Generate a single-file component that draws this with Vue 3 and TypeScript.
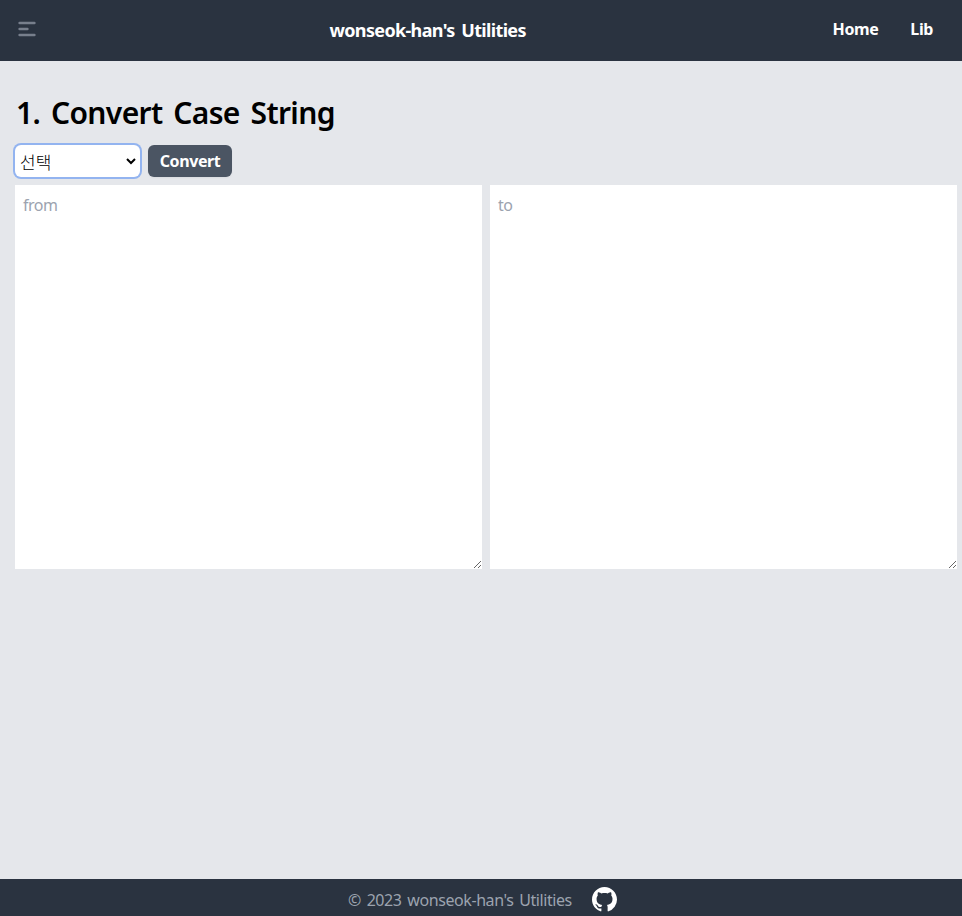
<script setup lang="ts">
import { ref } from 'vue'

type CaseKind = '' | 'upper' | 'lower' | 'camel' | 'snake'

const kind = ref<CaseKind>('')
const source = ref('')
const result = ref('')

const words = (text: string): string[] =>
  text.replace(/([a-z\d])([A-Z])/g, '$1 $2').split(/[\s_-]+/).filter(Boolean)

function convert(): void {
  const list = words(source.value).map((w) => w.toLowerCase())
  switch (kind.value) {
    case 'upper':
      result.value = source.value.toUpperCase()
      break
    case 'lower':
      result.value = source.value.toLowerCase()
      break
    case 'camel':
      result.value = list.map((w, i) => (i ? w[0].toUpperCase() + w.slice(1) : w)).join('')
      break
    case 'snake':
      result.value = list.join('_')
      break
    default:
      result.value = source.value
  }
}
</script>

<template>
  <div class="page">
    <header class="navbar">
      <button class="menu" aria-label="menu">
        <svg width="24" height="24" viewBox="0 0 24 24" fill="none" stroke="currentColor" stroke-width="2.5" stroke-linecap="round">
          <path d="M4.6 6h14.8M4.6 12h7.8M4.6 18h14.8" />
        </svg>
      </button>
      <a class="brand">wonseok-han's Utilities</a>
      <nav class="links">
        <a class="home">Home</a>
        <a class="lib">Lib</a>
      </nav>
    </header>

    <main class="content">
      <h1>1. Convert Case String</h1>
      <div class="controls">
        <div class="select">
          <select v-model="kind">
            <option value="">선택</option>
            <option value="upper">UPPER</option>
            <option value="lower">lower</option>
            <option value="camel">camelCase</option>
            <option value="snake">snake_case</option>
          </select>
          <svg class="chevron" width="10" height="7" viewBox="0 0 10 7" fill="none" stroke="#000" stroke-width="2">
            <path d="M1 1l4 4 4-4" />
          </svg>
        </div>
        <button class="convert" @click="convert">Convert</button>
      </div>
      <div class="areas">
        <textarea v-model="source" placeholder="from"></textarea>
        <textarea v-model="result" placeholder="to"></textarea>
      </div>
    </main>

    <footer class="footer">
      <p>© 2023 wonseok-han's Utilities</p>
      <svg class="github" width="25" height="25" viewBox="0 0 16 16" fill="#fff">
        <path d="M8 0C3.58 0 0 3.58 0 8c0 3.54 2.29 6.53 5.47 7.59.4.07.55-.17.55-.38 0-.19-.01-.82-.01-1.49-2.01.37-2.53-.49-2.69-.94-.09-.23-.48-.94-.82-1.13-.28-.15-.68-.52-.01-.53.63-.01 1.08.58 1.23.82.72 1.21 1.87.87 2.33.66.07-.52.28-.87.51-1.07-1.78-.2-3.64-.89-3.64-3.95 0-.87.31-1.59.82-2.15-.08-.2-.36-1.02.08-2.12 0 0 .67-.21 2.2.82.64-.18 1.32-.27 2-.27s1.36.09 2 .27c1.53-1.04 2.2-.82 2.2-.82.44 1.1.16 1.92.08 2.12.51.56.82 1.27.82 2.15 0 3.07-1.87 3.75-3.65 3.95.29.25.54.73.54 1.48 0 1.07-.01 1.93-.01 2.2 0 .21.15.46.55.38A8.01 8.01 0 0 0 16 8c0-4.42-3.58-8-8-8z" />
      </svg>
    </footer>
  </div>
</template>

<style>
body {
  margin: 0;
}
</style>

<style scoped>
.page {
  display: flex;
  flex-direction: column;
  height: 916px;
  overflow: hidden;
  background: #e5e7eb;
  color: #000;
  font-family: "Noto Sans", "Noto Sans CJK KR", sans-serif;
  font-size: 16px;
}
* {
  box-sizing: border-box;
}
button,
select,
textarea {
  font: inherit;
}
.navbar {
  display: flex;
  align-items: center;
  flex: none;
  height: 61px;
  padding: 0 29px 0 15px;
  background: #2a3340;
  color: #fff;
  font-weight: 700;
}
.menu {
  display: flex;
  padding: 0;
  margin-top: -3px;
  border: 0;
  background: none;
  color: #777f8c;
}
.brand {
  margin: -2px 0 0 290.5px;
  font-size: 18px;
  letter-spacing: -0.65px;
  word-spacing: 2.5px;
  white-space: nowrap;
}
.links {
  display: flex;
  gap: 32px;
  margin-left: auto;
  margin-top: -4px;
  letter-spacing: -0.4px;
}
.content {
  flex: 1;
  padding: 28px 4px 0 15px;
}
h1 {
  margin: 0;
  padding-left: 1px;
  font-size: 30px;
  line-height: 48px;
  font-weight: 600;
  letter-spacing: -0.63px;
  word-spacing: 3.6px;
  white-space: nowrap;
}
.controls {
  display: flex;
  gap: 8px;
  padding-top: 8px;
  height: 48px;
}
.select {
  position: relative;
  width: 125px;
  height: 32px;
}
.select select {
  appearance: none;
  display: block;
  width: 100%;
  height: 32px;
  padding: 0 4px 0 5px;
  border: 0;
  border-radius: 6px;
  outline: none;
  background: #fff;
  box-shadow: 0 0 0 2px #93b4f0;
  color: #000;
  font-family: "Noto Sans CJK KR", sans-serif;
  font-size: 17px;
  font-weight: 300;
}
.chevron {
  position: absolute;
  right: 4px;
  top: 13px;
}
.convert {
  width: 84px;
  height: 32px;
  padding: 0;
  border: 0;
  border-radius: 6px;
  background: #4b5563;
  color: #fff;
  font-weight: 700;
  letter-spacing: -0.4px;
  box-shadow: 0 1px 2px rgba(0, 0, 0, 0.05);
}
.areas {
  display: grid;
  grid-template-columns: 467px 467px;
  gap: 8px;
}
textarea {
  display: block;
  height: 384px;
  padding: 8px;
  border: 0;
  outline: none;
  background: #fff;
  line-height: 24px;
  letter-spacing: -0.5px;
}
textarea::placeholder {
  color: #9ca3af;
}
.footer {
  display: flex;
  flex: none;
  align-items: center;
  height: 37px;
  padding: 3px 0 0 348px;
  background: #2a3340;
  color: #9ca3af;
}
.footer p {
  margin: 2px 0 0;
  letter-spacing: -0.42px;
  word-spacing: 2px;
  white-space: nowrap;
}
.github {
  margin-left: 20px;
}
</style>
